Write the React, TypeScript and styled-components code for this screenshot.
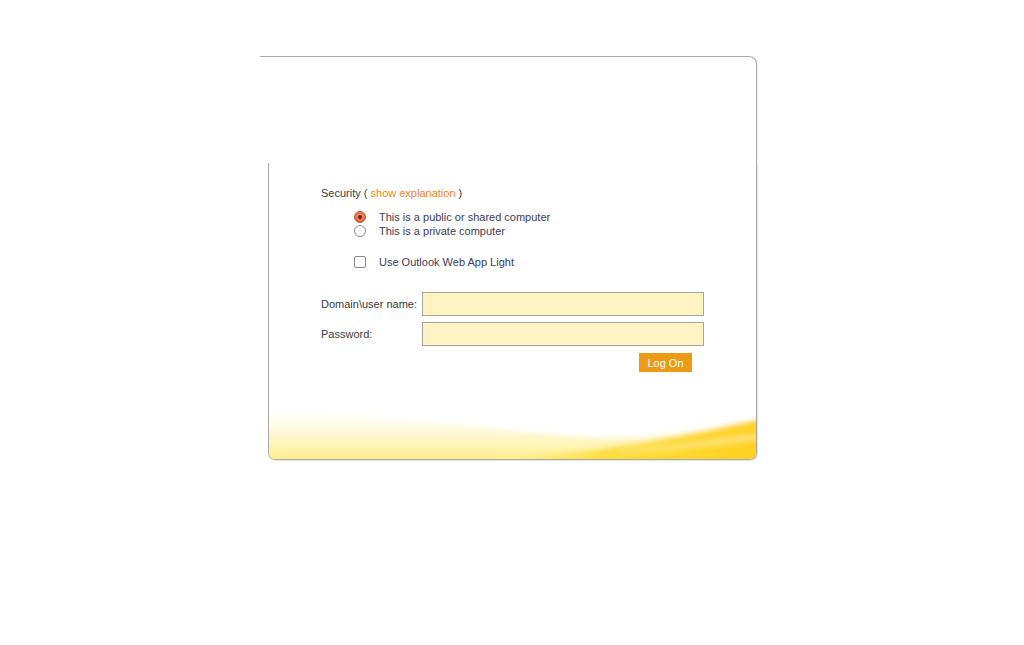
import React, { FunctionComponent, useState } from 'react';
import styled, { createGlobalStyle } from 'styled-components';

const GlobalStyle = createGlobalStyle`
    html, body {
        margin: 0;
        padding: 0;
        background: #fff;
    }

    body {
        font-family: 'Liberation Sans', Arial, sans-serif;
        font-size: 11px;
        color: #333;
    }
`;

const StyledPage = styled.div`
    width: 1024px;
    height: 645px;
    padding: 56px 0 0 260px;
    box-sizing: border-box;
`;

const StyledFrame = styled.div`
    width: 497px;
    display: flex;
    flex-direction: column;
`;

const StyledHeader = styled.div`
    height: 106px;
    border-top: 1px solid #a9a9a9;
    border-right: 1px solid #a9a9a9;
    border-top-right-radius: 8px;
    box-shadow: 1px 0 1px rgba(0, 0, 0, 0.06);
`;

const StyledCard = styled.div`
    margin-left: 8px;
    height: 297px;
    box-sizing: border-box;
    border: 1px solid #a9a9a9;
    border-top: none;
    border-bottom-left-radius: 7px;
    border-bottom-right-radius: 7px;
    box-shadow: 1px 1px 1px rgba(0, 0, 0, 0.12);
    overflow: hidden;
    display: flex;
    flex-direction: column;
`;

const StyledContent = styled.div`
    padding: 23px 0 0 52px;
`;

const StyledLine = styled.div`
    line-height: 14px;
    color: #3a3a3a;
`;

const StyledLink = styled.span`
    color: #f7811e;
    cursor: pointer;
`;

const StyledOptions = styled.div`
    margin: 10px 0 0 33px;
    display: flex;
    flex-direction: column;
`;

const StyledOption = styled.label<{ $gap?: number }>`
    display: flex;
    align-items: center;
    height: 14px;
    margin-top: ${(p) => p.$gap ?? 0}px;
    color: #3b3b56;
    cursor: pointer;
`;

const StyledRadio = styled.span<{ $checked: boolean }>`
    width: 12px;
    height: 12px;
    box-sizing: border-box;
    border-radius: 50%;
    margin-right: 13px;
    display: flex;
    align-items: center;
    justify-content: center;
    border: 1px solid ${(p) => (p.$checked ? '#c2552f' : '#8a8a8a')};
    background: ${(p) =>
        p.$checked
            ? 'radial-gradient(circle at 50% 40%, #f49a76 0%, #e86c45 70%)'
            : '#fff'};

    &::after {
        content: '';
        width: 4px;
        height: 4px;
        border-radius: 50%;
        background: ${(p) => (p.$checked ? '#6b2412' : 'transparent')};
    }
`;

const StyledCheckbox = styled.span<{ $checked: boolean }>`
    width: 12px;
    height: 12px;
    box-sizing: border-box;
    border: 1px solid #8a8a8a;
    border-radius: 2px;
    margin-right: 13px;
    background: #fff;
    display: flex;
    align-items: center;
    justify-content: center;
    font-size: 10px;
    line-height: 1;
    color: #333;
`;

const StyledForm = styled.div`
    margin-top: 23px;
    width: 383px;
    display: flex;
    flex-direction: column;
    gap: 6px;
`;

const StyledRow = styled.div`
    display: flex;
    align-items: center;
`;

const StyledLabel = styled.label`
    width: 101px;
    color: #3a3a3a;
`;

const StyledInput = styled.input`
    width: 282px;
    height: 24px;
    box-sizing: border-box;
    border: 1px solid #a3a3a3;
    background: #fff3c4;
    padding: 2px 4px;
    font-family: inherit;
    font-size: 11px;
    outline: none;
`;

const StyledActions = styled.div`
    display: flex;
    justify-content: flex-end;
    padding: 1px 12px 0 0;
`;

const StyledButton = styled.button`
    width: 53px;
    height: 19px;
    border: none;
    padding: 0;
    background: #ec9b17;
    color: #fff;
    font-family: inherit;
    font-size: 11px;
    cursor: pointer;
`;

const StyledWave = styled.svg`
    display: block;
    margin-top: auto;
    width: 100%;
    height: 52px;
`;

const Wave = () => (
    <StyledWave viewBox='0 0 487 52' preserveAspectRatio='none'>
        <defs>
            <filter id='waveBlur' x='-10%' y='-50%' width='120%' height='200%'>
                <feGaussianBlur stdDeviation='2.5' />
            </filter>
            <linearGradient id='waveBase' x1='0' y1='0' x2='0' y2='1'>
                <stop offset='0%' stopColor='#fffbe8' stopOpacity='0' />
                <stop offset='35%' stopColor='#fff7d2' stopOpacity='0.9' />
                <stop offset='75%' stopColor='#ffee8a' />
                <stop offset='100%' stopColor='#ffe23c' />
            </linearGradient>
            <linearGradient id='waveRight' x1='0' y1='0' x2='1' y2='0'>
                <stop offset='0%' stopColor='#ffdc2e' stopOpacity='0' />
                <stop offset='40%' stopColor='#ffdb2a' stopOpacity='0.85' />
                <stop offset='100%' stopColor='#ffce1f' />
            </linearGradient>
        </defs>
        <g filter='url(#waveBlur)'>
            <path
                d='M-20,2 C100,2 220,24 320,30 C400,34 450,18 510,6 L510,70 L-20,70 Z'
                fill='url(#waveBase)'
            />
            <path
                d='M230,52 C330,46 420,28 510,8 L510,70 L230,70 Z'
                fill='url(#waveRight)'
            />
            <path
                d='M350,44 C410,38 450,32 510,24 L510,31 C450,37 410,42 350,46 Z'
                fill='#fff'
                opacity='0.35'
            />
        </g>
    </StyledWave>
);

const App: FunctionComponent = () => {
    const [isPublic, setIsPublic] = useState(true);
    const [isLight, setIsLight] = useState(false);

    return (
        <StyledPage>
            <GlobalStyle />
            <StyledFrame>
                <StyledHeader />
                <StyledCard>
                    <StyledContent>
                        <StyledLine>
                            Security ( <StyledLink>show explanation</StyledLink> )
                        </StyledLine>
                        <StyledOptions>
                            <StyledOption onClick={() => setIsPublic(true)}>
                                <StyledRadio $checked={isPublic} />
                                This is a public or shared computer
                            </StyledOption>
                            <StyledOption onClick={() => setIsPublic(false)}>
                                <StyledRadio $checked={!isPublic} />
                                This is a private computer
                            </StyledOption>
                            <StyledOption
                                $gap={17}
                                onClick={() => setIsLight(!isLight)}
                            >
                                <StyledCheckbox $checked={isLight}>
                                    {isLight ? '✓' : ''}
                                </StyledCheckbox>
                                Use Outlook Web App Light
                            </StyledOption>
                        </StyledOptions>
                        <StyledForm>
                            <StyledRow>
                                <StyledLabel htmlFor='username'>
                                    Domain\user name:
                                </StyledLabel>
                                <StyledInput id='username' type='text' />
                            </StyledRow>
                            <StyledRow>
                                <StyledLabel htmlFor='password'>
                                    Password:
                                </StyledLabel>
                                <StyledInput id='password' type='password' />
                            </StyledRow>
                            <StyledActions>
                                <StyledButton type='button'>Log On</StyledButton>
                            </StyledActions>
                        </StyledForm>
                    </StyledContent>
                    <Wave />
                </StyledCard>
            </StyledFrame>
        </StyledPage>
    );
};

export default App;
